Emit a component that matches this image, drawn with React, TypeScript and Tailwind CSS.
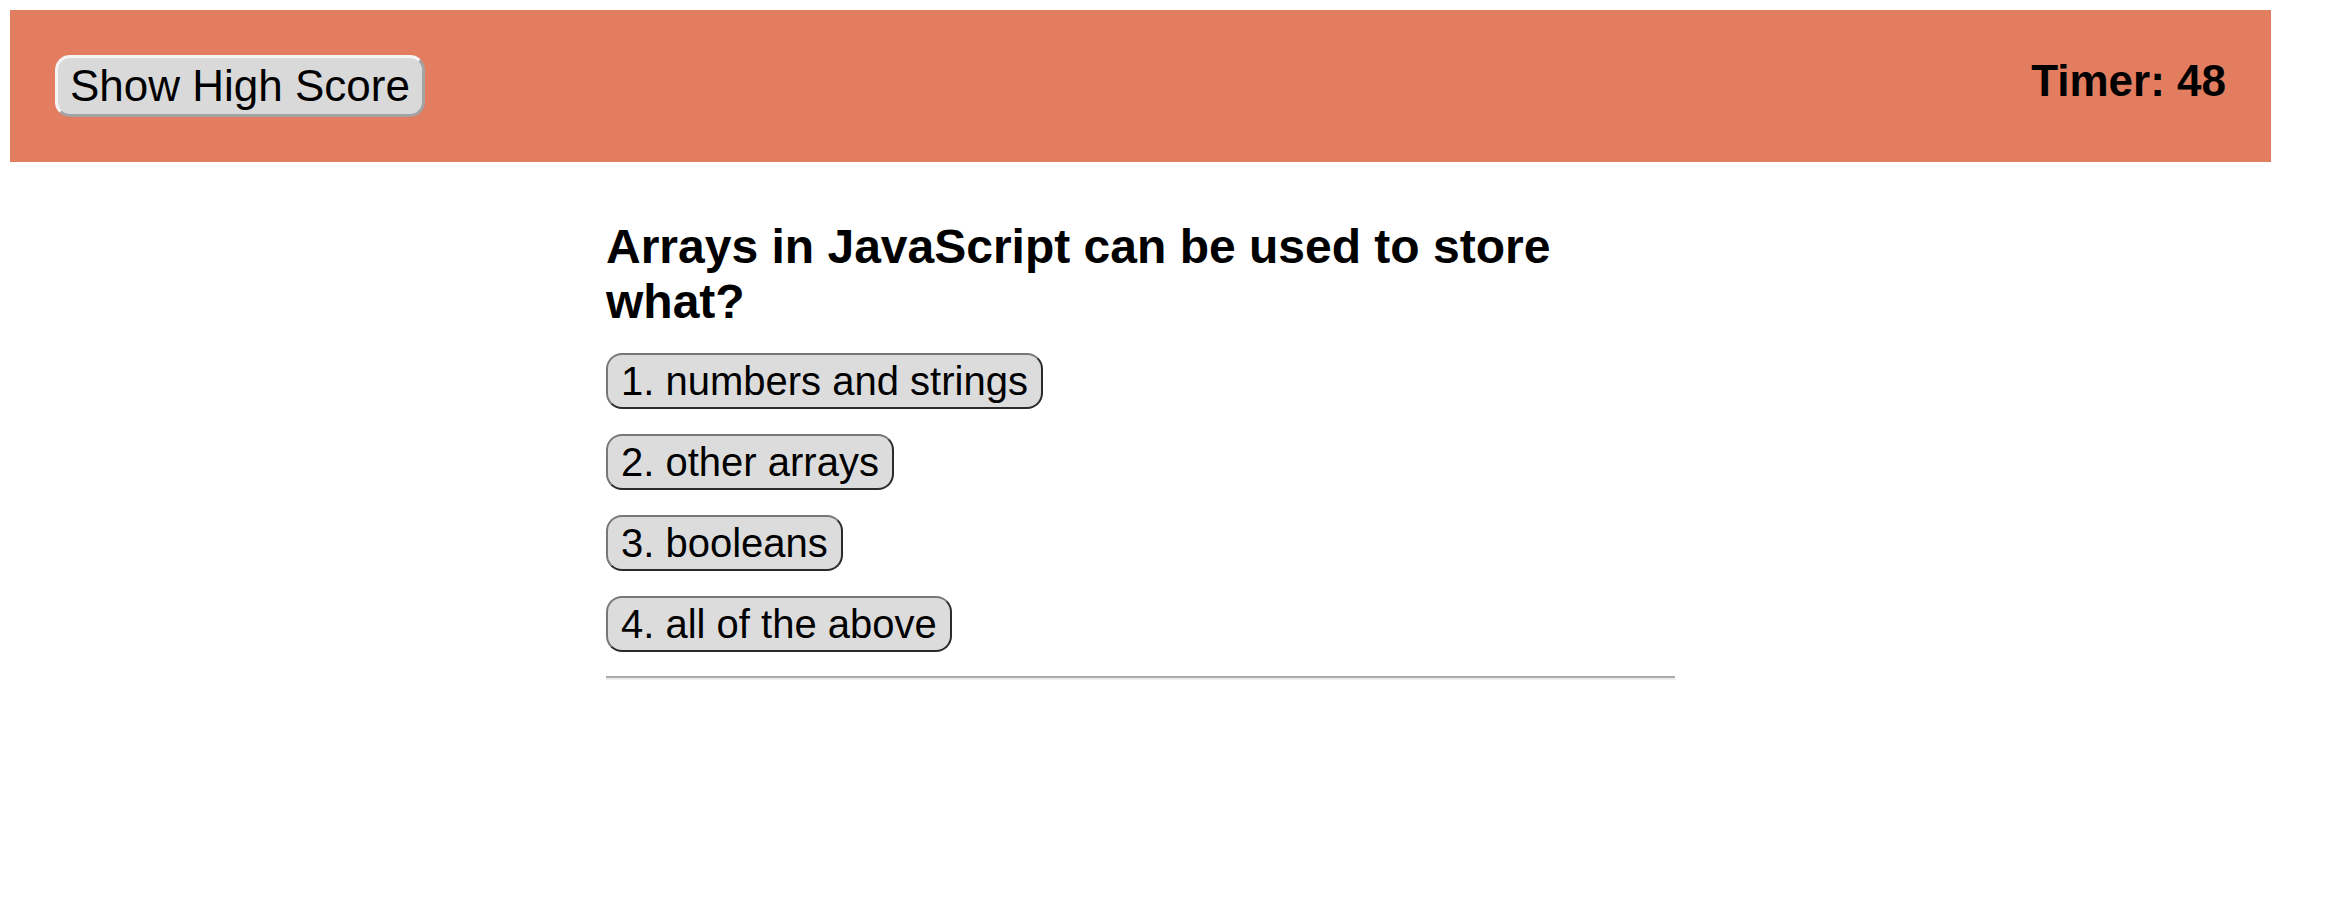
import React from "react";

const answers = [
  "1. numbers and strings",
  "2. other arrays",
  "3. booleans",
  "4. all of the above",
];

export default function App() {
  return (
    <div className="w-[2336px] min-h-[906px] bg-white pt-[10px] pl-[10px] font-['Liberation_Sans',Arial,sans-serif] text-black">
      <div className="w-[2261px]">
        <header className="flex items-start justify-between bg-[#e27d60] p-[45px] h-[152px]">
          <button className="h-[62px] rounded-[15px] border-[3px] border-t-[#f4f4f4] border-l-[#f4f4f4] border-b-[#a3a3a3] border-r-[#a3a3a3] bg-[#d9d9d9] px-[12px] text-[44px] leading-[50px] text-black">
            Show High Score
          </button>
          <div className="text-[44px] font-bold leading-[51px]">Timer: 48</div>
        </header>
        <main className="mx-auto mt-[57px] w-[1069px]">
          <h2 className="text-[48px] font-bold leading-[55px]">
            Arrays in JavaScript can be used to store what?
          </h2>
          <div className="mt-[24px] flex flex-col items-start gap-[25px]">
            {answers.map((a) => (
              <button
                key={a}
                className="h-[56px] rounded-[16px] border-[2px] border-t-[#777777] border-l-[#777777] border-b-[#2b2b2b] border-r-[#2b2b2b] bg-[#dcdcdc] px-[13px] text-[40px] leading-[46px] text-black"
              >
                {a}
              </button>
            ))}
          </div>
          <div className="mt-[24px] h-[4px] border-t-[2px] border-t-[#ababab] border-b-[2px] border-b-[#ededed]" />
        </main>
      </div>
    </div>
  );
}
